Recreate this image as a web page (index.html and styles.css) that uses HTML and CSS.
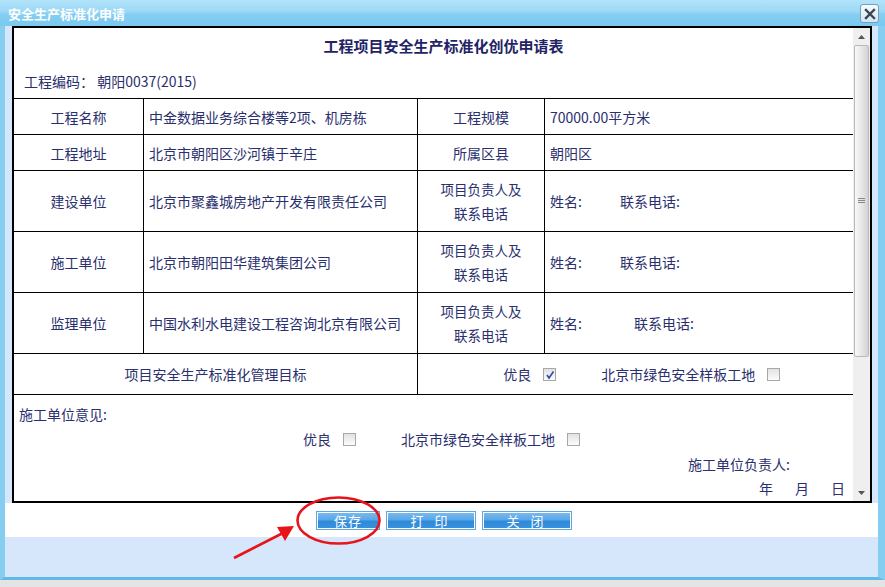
FILE: index.html
```html
<!DOCTYPE html>
<html lang="zh-CN">
<head>
    <meta charset="UTF-8">
    <title>安全生产标准化申请</title>
    <link rel="stylesheet" href="styles.css">
</head>
<body>
<div class="window">
    <div class="titlebar">
        <span class="title">安全生产标准化申请</span>
        <span class="close-btn">
            <svg width="12" height="12" viewBox="0 0 12 12"><path d="M2 2 L10 10 M10 2 L2 10" stroke="#3d4650" stroke-width="2.4" stroke-linecap="square"/></svg>
        </span>
    </div>
    <div class="client">
        <div class="frame-row">
            <div class="doc">
                <div class="doc-content">
                    <div class="doc-title">工程项目安全生产标准化创优申请表</div>
                    <div class="doc-code">工程编码： 朝阳0037(2015)</div>
                    <table class="form-table">
                        <colgroup>
                            <col class="c1"><col class="c2"><col class="c3"><col class="c4">
                        </colgroup>
                        <tr class="r-short">
                            <td class="label first">工程名称</td>
                            <td class="value">中金数据业务综合楼等2项、机房栋</td>
                            <td class="label">工程规模</td>
                            <td class="value">70000.00平方米</td>
                        </tr>
                        <tr class="r-short">
                            <td class="label first">工程地址</td>
                            <td class="value">北京市朝阳区沙河镇于辛庄</td>
                            <td class="label">所属区县</td>
                            <td class="value">朝阳区</td>
                        </tr>
                        <tr class="r-tall">
                            <td class="label first">建设单位</td>
                            <td class="value">北京市聚鑫城房地产开发有限责任公司</td>
                            <td class="label two-line">项目负责人及<br>联系电话</td>
                            <td class="value">姓名:<span class="phone">联系电话:</span></td>
                        </tr>
                        <tr class="r-tall">
                            <td class="label first">施工单位</td>
                            <td class="value">北京市朝阳田华建筑集团公司</td>
                            <td class="label two-line">项目负责人及<br>联系电话</td>
                            <td class="value">姓名:<span class="phone">联系电话:</span></td>
                        </tr>
                        <tr class="r-tall">
                            <td class="label first">监理单位</td>
                            <td class="value">中国水利水电建设工程咨询北京有限公司</td>
                            <td class="label two-line">项目负责人及<br>联系电话</td>
                            <td class="value">姓名:<span class="phone wide">联系电话:</span></td>
                        </tr>
                        <tr class="r-goal">
                            <td class="label first" colspan="2">项目安全生产标准化管理目标</td>
                            <td class="label goal-choices" colspan="2">
                                优良<span class="check checked">
                                    <svg width="10" height="10" viewBox="0 0 10 10"><path d="M2 5 L4 8 L8.5 1.5" fill="none" stroke="#2b4fa8" stroke-width="1.6"/></svg>
                                </span><span class="gap-label">北京市绿色安全样板工地</span><span class="check"></span>
                            </td>
                        </tr>
                    </table>
                    <div class="opinion">
                        <div class="op-line">施工单位意见:</div>
                        <div class="op-line op-choices">优良<span class="check"></span><span class="gap-label">北京市绿色安全样板工地</span><span class="check"></span></div>
                        <div class="op-line op-sign">施工单位负责人:</div>
                        <div class="op-line op-date"><span>年</span><span>月</span><span>日</span></div>
                    </div>
                </div>
                <div class="scrollbar">
                    <div class="sb-arrow"><svg width="7" height="4" viewBox="0 0 7 4"><path d="M0 4 L3.5 0 L7 4Z" fill="#555"/></svg></div>
                    <div class="sb-track">
                        <div class="sb-thumb">
                            <svg width="7" height="6" viewBox="0 0 7 6"><path d="M0 0.5 H7 M0 2.5 H7 M0 4.5 H7" stroke="#888" stroke-width="1"/></svg>
                        </div>
                    </div>
                    <div class="sb-arrow"><svg width="7" height="4" viewBox="0 0 7 4"><path d="M0 0 L3.5 4 L7 0Z" fill="#555"/></svg></div>
                </div>
            </div>
        </div>
        <div class="button-bar">
            <span class="btn btn-save">保存</span>
            <span class="btn">打 印</span>
            <span class="btn">关 闭</span>
        </div>
        <div class="footer-band"></div>
    </div>
    <svg class="annotation" width="885" height="587" viewBox="0 0 885 587">
        <ellipse cx="338.5" cy="520.5" rx="41" ry="23" fill="none" stroke="#e8141b" stroke-width="2.6"/>
        <path d="M234 558 L283 533" stroke="#e8141b" stroke-width="2.6"/>
        <path d="M294 526 L277 527 L285 541 Z" fill="#e8141b"/>
    </svg>
</div>
</body>
</html>
```
FILE: styles.css
```css
body {
    margin: 0;
    background: #e4e4e4;
    font-family: "Noto Sans CJK SC", sans-serif;
    font-size: 14px;
    color: #2a2f6e;
}
.window {
    position: relative;
    width: 885px;
    height: 580px;
    display: flex;
    flex-direction: column;
}
.titlebar {
    height: 26px;
    display: flex;
    align-items: center;
    justify-content: space-between;
    padding: 0 6px 0 8px;
    box-sizing: border-box;
    background: linear-gradient(#b2e3fa 0%, #9bd8f6 45%, #84cef2 55%, #7ac9f0 100%);
}
.title {
    color: #fff;
    font-weight: bold;
    font-size: 13px;
}
.close-btn {
    width: 17px;
    height: 17px;
    border: 1px solid #7d9cb2;
    border-radius: 3px;
    background: linear-gradient(#f4fbff, #cfe9f8);
    display: flex;
    align-items: center;
    justify-content: center;
    margin-top: 1px;
}
.client {
    flex: 1;
    display: flex;
    flex-direction: column;
    border-left: 5px solid #86cdf2;
    border-right: 7px solid #86cdf2;
    border-bottom: 3px solid #62b8e8;
}
.frame-row {
    height: 477px;
    background: #d6e6fb;
    padding: 0 6px 0 7px;
}
.doc {
    height: 100%;
    box-sizing: border-box;
    border: 2px solid #000;
    background: #fff;
    display: flex;
}
.doc-content {
    flex: 1;
    overflow: hidden;
}
.doc-title {
    height: 36px;
    line-height: 36px;
    text-align: center;
    padding-left: 20px;
    font-weight: bold;
    font-size: 15px;
    color: #1f2466;
}
.doc-code {
    height: 34px;
    line-height: 34px;
    padding-left: 10px;
}
.form-table {
    width: 840px;
    margin-left: -1px;
    border-collapse: collapse;
    table-layout: fixed;
}
.c1 { width: 130px; }
.c2 { width: 274px; }
.c3 { width: 127px; }
.c4 { width: 309px; }
.form-table td {
    border: 1px solid #000;
    padding: 0;
    line-height: 20px;
}
.form-table tr td:last-child {
    border-right: none;
}
.r-short td { height: 35px; }
.r-tall td { height: 60px; }
.r-goal td { height: 40px; }
.label {
    text-align: center;
}
.goal-choices {
    padding-left: 12px !important;
}
.two-line {
    line-height: 24px !important;
    font-size: 13.5px;
}
.value {
    padding-left: 5px !important;
}
.phone {
    margin-left: 38px;
}
.phone.wide {
    margin-left: 52px;
}
.check {
    display: inline-block;
    width: 11px;
    height: 11px;
    border: 1px solid #a8a8a8;
    background: linear-gradient(#e2e2e2, #fbfbfb);
    vertical-align: -1px;
    margin-left: 12px;
    position: relative;
}
.check svg {
    position: absolute;
    left: 1px;
    top: 1px;
}
.gap-label {
    margin-left: 45px;
}
.opinion {
    padding-top: 7px;
}
.op-line {
    height: 25px;
    line-height: 25px;
    padding-left: 5px;
}
.op-choices {
    padding-left: 289px;
}
.op-sign {
    text-align: right;
    padding-right: 63px;
}
.op-date {
    display: flex;
    justify-content: flex-end;
    gap: 22px;
    padding-right: 8px;
    line-height: 22px;
}
.scrollbar {
    width: 17px;
    background: #efefef;
    display: flex;
    flex-direction: column;
}
.sb-arrow {
    height: 17px;
    display: flex;
    align-items: center;
    justify-content: center;
}
.sb-track {
    flex: 1;
}
.sb-thumb {
    height: 310px;
    margin: 0 1px;
    border: 1px solid #b9b9b9;
    border-radius: 2px;
    background: linear-gradient(90deg, #f8f8f8, #e4e4e4 60%, #d2d2d2);
    display: flex;
    align-items: center;
    justify-content: center;
}
.button-bar {
    height: 34px;
    background: #fff;
    display: flex;
    align-items: center;
    padding-left: 311px;
    gap: 6px;
}
.btn {
    width: 88px;
    height: 17px;
    border: 1px solid #5aa7e6;
    box-shadow: inset 0 0 0 1px #fff;
    background: linear-gradient(#7cbcef 0%, #5aa6e8 45%, #2f8ad9 55%, #3a92dc 100%);
    color: #fff;
    font-size: 13px;
    line-height: 17px;
    text-align: center;
    letter-spacing: 4px;
}
.btn-save {
    width: 62px;
    letter-spacing: 1px;
}
.footer-band {
    flex: 1;
    background: #d6e6fb;
}
.annotation {
    position: absolute;
    left: 0;
    top: 0;
    pointer-events: none;
}
```
